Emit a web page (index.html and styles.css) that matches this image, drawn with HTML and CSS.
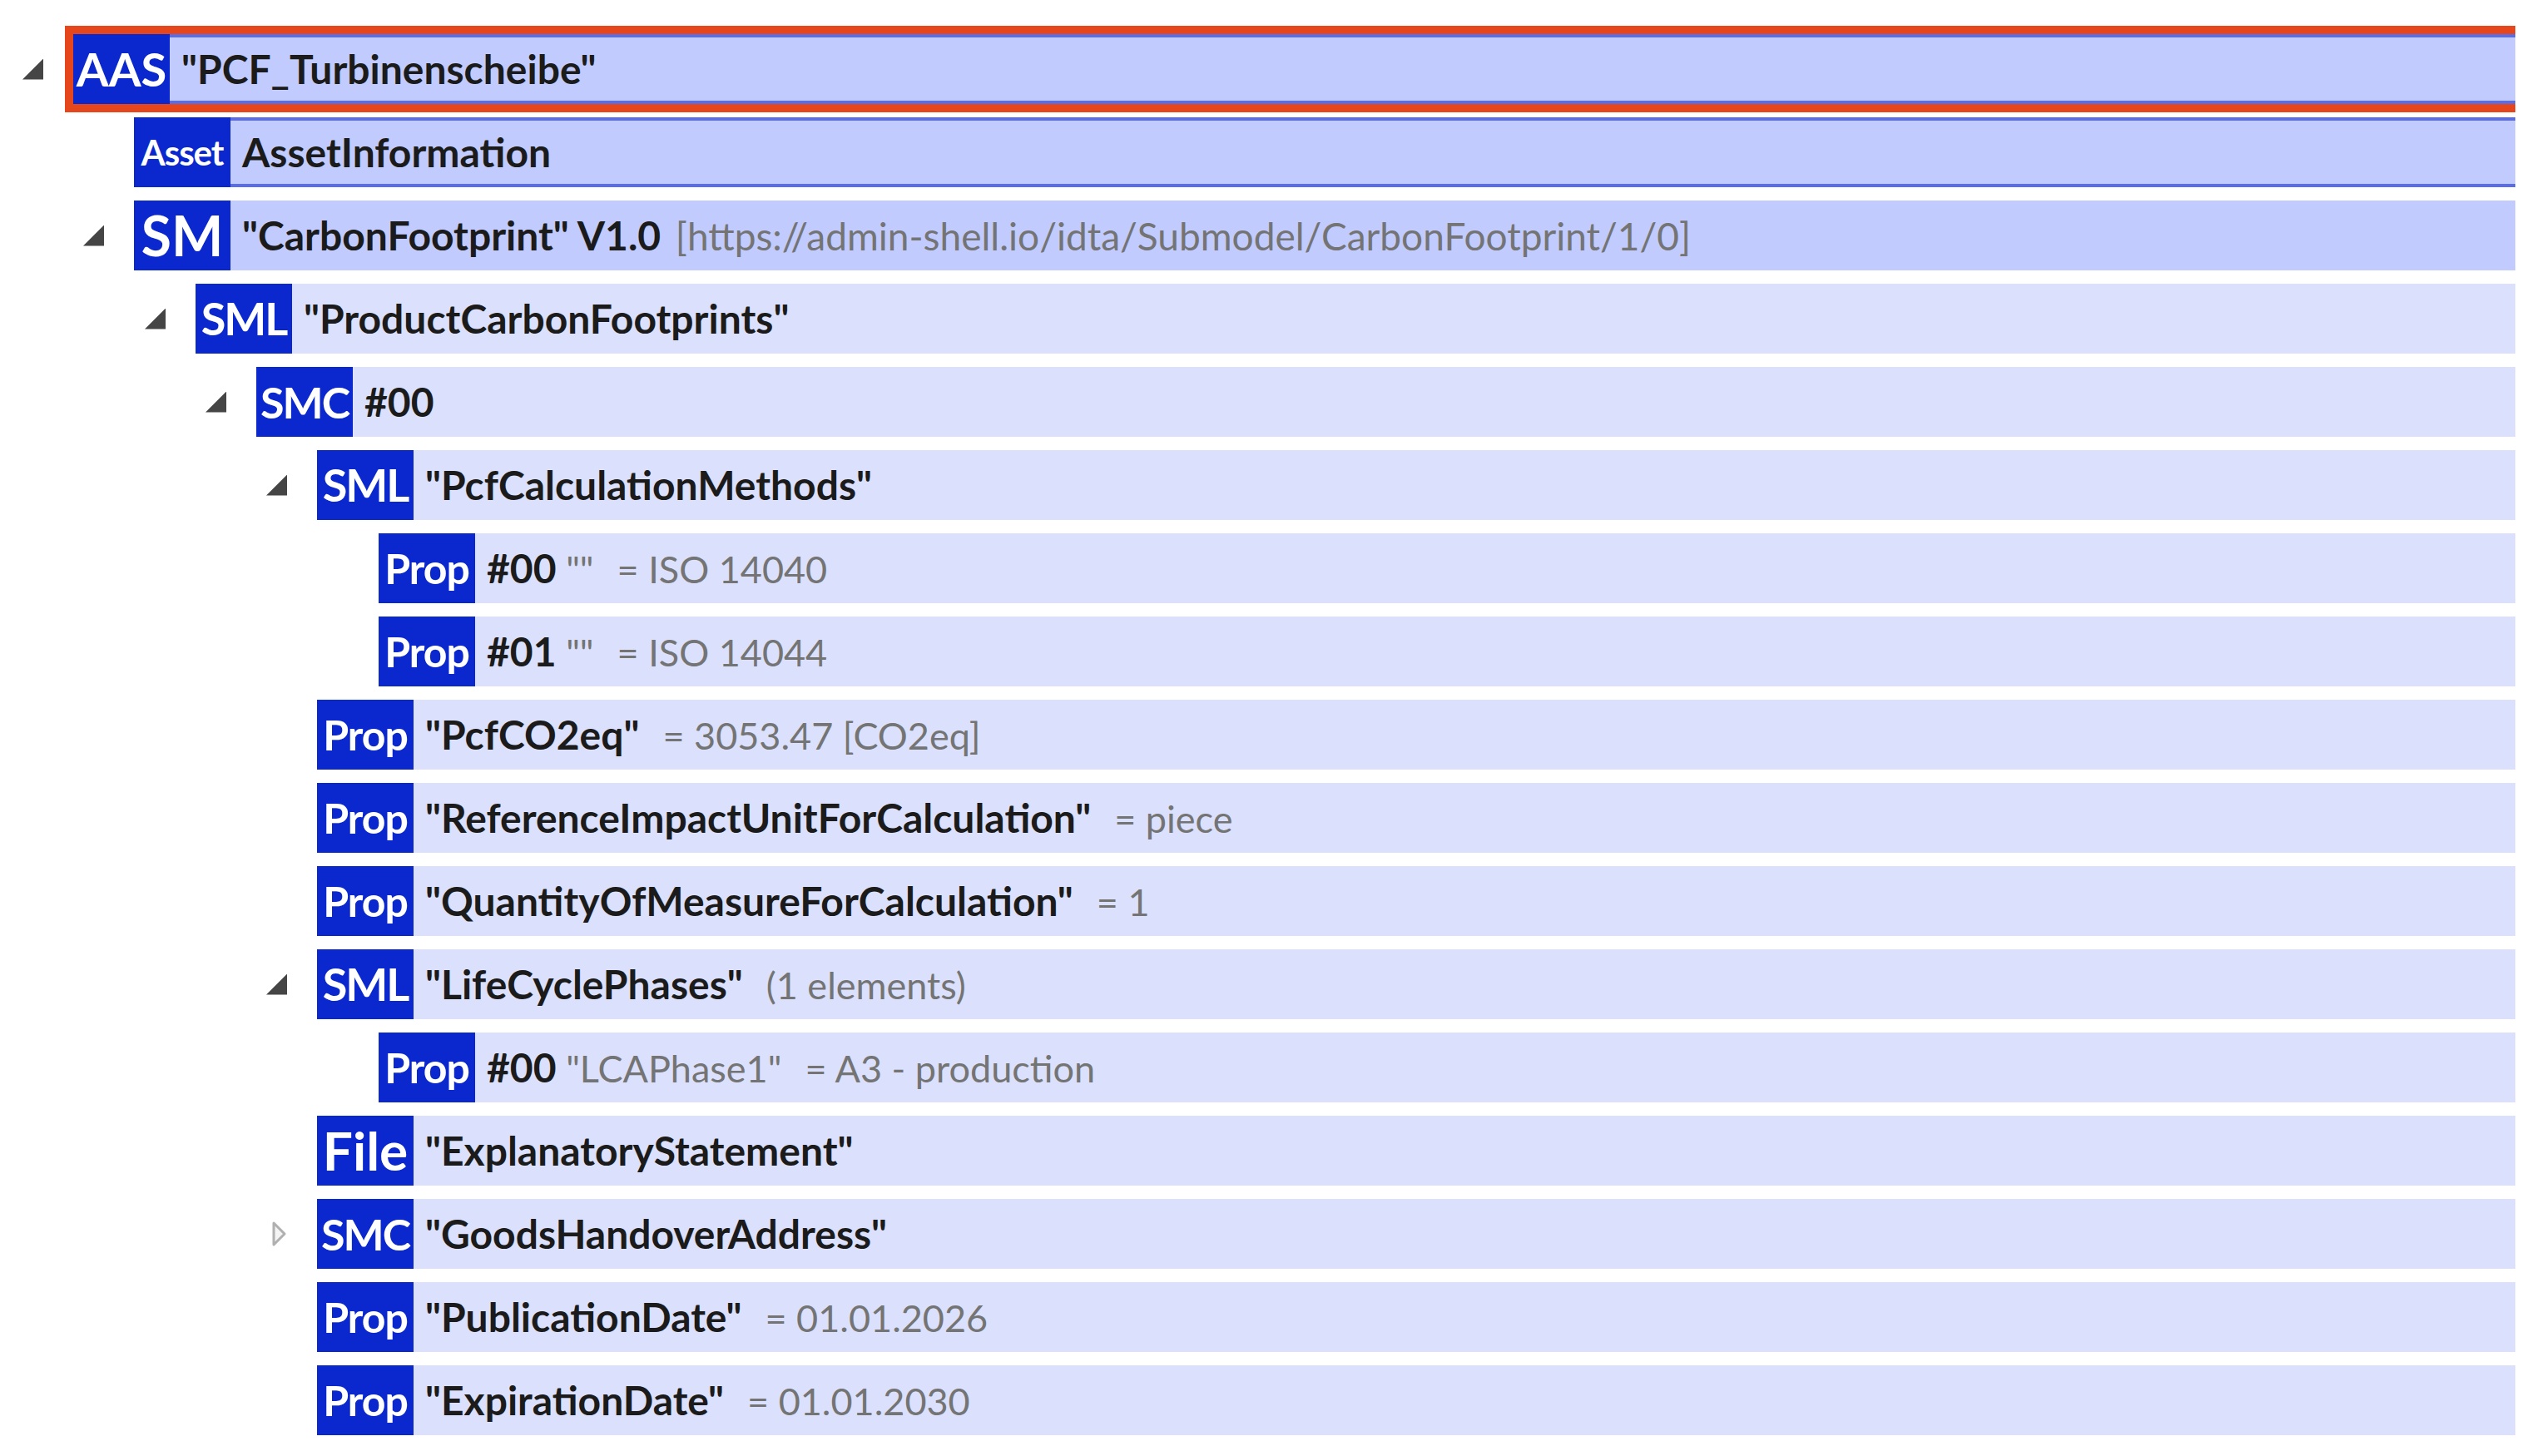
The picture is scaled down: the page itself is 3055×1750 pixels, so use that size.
FILE: index.html
```html
<!DOCTYPE html>
<html lang="de">
<head>
    <meta charset="UTF-8">
    <title>AAS Explorer</title>
    <link rel="stylesheet" href="styles.css">
</head>
<body>
    <div class="tree">
        <div class="node lvl-0">
            <span class="toggle open"></span>
            <div class="item strong framed selected">
                <span class="badge b-aas">AAS</span>
                <span class="label">"PCF_Turbinenscheibe"</span>
            </div>
        </div>
        <div class="node lvl-1">
            <span class="toggle"></span>
            <div class="item strong framed">
                <span class="badge b-asset">Asset</span>
                <span class="label">AssetInformation</span>
            </div>
        </div>
        <div class="node lvl-1">
            <span class="toggle open"></span>
            <div class="item strong">
                <span class="badge b-sm">SM</span>
                <span class="label">"CarbonFootprint" V1.0 <span class="dim url">[https://admin-shell.io/idta/Submodel/CarbonFootprint/1/0]</span></span>
            </div>
        </div>
        <div class="node lvl-2">
            <span class="toggle open"></span>
            <div class="item">
                <span class="badge b-sml">SML</span>
                <span class="label">"ProductCarbonFootprints"</span>
            </div>
        </div>
        <div class="node lvl-3">
            <span class="toggle open"></span>
            <div class="item">
                <span class="badge b-smc">SMC</span>
                <span class="label">#00</span>
            </div>
        </div>
        <div class="node lvl-4">
            <span class="toggle open"></span>
            <div class="item">
                <span class="badge b-sml">SML</span>
                <span class="label">"PcfCalculationMethods"</span>
            </div>
        </div>
        <div class="node lvl-5">
            <span class="toggle"></span>
            <div class="item">
                <span class="badge b-prop">Prop</span>
                <span class="label">#00 <span class="dim">""</span><span class="dim value">= ISO 14040</span></span>
            </div>
        </div>
        <div class="node lvl-5">
            <span class="toggle"></span>
            <div class="item">
                <span class="badge b-prop">Prop</span>
                <span class="label">#01 <span class="dim">""</span><span class="dim value">= ISO 14044</span></span>
            </div>
        </div>
        <div class="node lvl-4">
            <span class="toggle"></span>
            <div class="item">
                <span class="badge b-prop">Prop</span>
                <span class="label">"PcfCO2eq"<span class="dim value">= 3053.47 [CO2eq]</span></span>
            </div>
        </div>
        <div class="node lvl-4">
            <span class="toggle"></span>
            <div class="item">
                <span class="badge b-prop">Prop</span>
                <span class="label">"ReferenceImpactUnitForCalculation"<span class="dim value">= piece</span></span>
            </div>
        </div>
        <div class="node lvl-4">
            <span class="toggle"></span>
            <div class="item">
                <span class="badge b-prop">Prop</span>
                <span class="label">"QuantityOfMeasureForCalculation"<span class="dim value">= 1</span></span>
            </div>
        </div>
        <div class="node lvl-4">
            <span class="toggle open"></span>
            <div class="item">
                <span class="badge b-sml">SML</span>
                <span class="label">"LifeCyclePhases"<span class="dim value">(1 elements)</span></span>
            </div>
        </div>
        <div class="node lvl-5">
            <span class="toggle"></span>
            <div class="item">
                <span class="badge b-prop">Prop</span>
                <span class="label">#00 <span class="dim">"LCAPhase1"</span><span class="dim value">= A3 - production</span></span>
            </div>
        </div>
        <div class="node lvl-4">
            <span class="toggle"></span>
            <div class="item">
                <span class="badge b-file">File</span>
                <span class="label">"ExplanatoryStatement"</span>
            </div>
        </div>
        <div class="node lvl-4">
            <span class="toggle closed">
                <svg width="25" height="32" viewBox="0 0 25 32"><path d="M9 3 L22 16 L9 29 Z" fill="#f4f4f4" stroke="#b0b0b0" stroke-width="3" stroke-linejoin="round"/></svg>
            </span>
            <div class="item">
                <span class="badge b-smc">SMC</span>
                <span class="label">"GoodsHandoverAddress"</span>
            </div>
        </div>
        <div class="node lvl-4">
            <span class="toggle"></span>
            <div class="item">
                <span class="badge b-prop">Prop</span>
                <span class="label">"PublicationDate"<span class="dim value">= 01.01.2026</span></span>
            </div>
        </div>
        <div class="node lvl-4">
            <span class="toggle"></span>
            <div class="item">
                <span class="badge b-prop">Prop</span>
                <span class="label">"ExpirationDate"<span class="dim value">= 01.01.2030</span></span>
            </div>
        </div>
    </div>
</body>
</html>
```

FILE: styles.css
```css
body {
    margin: 0;
    background-color: #fff;
    font-family: Lato, "Open Sans", sans-serif;
}
.tree {
    width: 3023px;
    overflow: hidden;
    padding-top: 41px;
}
.node {
    display: flex;
    align-items: center;
    height: 84px;
    margin-bottom: 16px;
}
.lvl-0 { padding-left: 27px; }
.lvl-1 { padding-left: 100px; }
.lvl-2 { padding-left: 174px; }
.lvl-3 { padding-left: 247px; }
.lvl-4 { padding-left: 320px; }
.lvl-5 { padding-left: 394px; }

.toggle {
    flex: none;
    width: 25px;
    height: 25px;
    margin-right: 36px;
}
.toggle.open {
    background-color: #454545;
    clip-path: polygon(100% 0, 100% 100%, 0 100%);
}
.toggle.closed {
    height: 32px;
}
.toggle svg {
    display: block;
}

.item {
    flex: 1;
    display: flex;
    align-items: center;
    height: 84px;
    background-color: #dbe1fc;
    white-space: nowrap;
}
.item.strong {
    background-color: #c1cbfd;
}
.item.framed {
    box-shadow: inset 0 4px #5a6de6, inset 0 -4px #5a6de6;
}
.item.selected {
    outline: 10px solid #e5461c;
}

.badge {
    flex: none;
    width: 116px;
    height: 84px;
    display: flex;
    align-items: center;
    justify-content: center;
    background-color: #0a28cd;
    color: #fff;
    font-weight: 700;
    line-height: 1;
}
.b-aas { font-size: 56px; }
.b-asset { font-size: 42px; letter-spacing: -1px; }
.b-sm { font-size: 66px; }
.b-sml { font-size: 54px; letter-spacing: -2px; }
.b-smc { font-size: 52px; letter-spacing: -2px; }
.b-prop { font-size: 50px; letter-spacing: -1px; }
.b-file { font-size: 64px; }

.label {
    margin-left: 14px;
    font-size: 48px;
    font-weight: 700;
    color: #1b1b1b;
    line-height: 1;
}
.dim {
    font-size: 45px;
    font-weight: 400;
    color: #747474;
}
.url {
    margin-left: 6px;
    font-size: 46px;
}
.value {
    margin-left: 28px;
}
```
